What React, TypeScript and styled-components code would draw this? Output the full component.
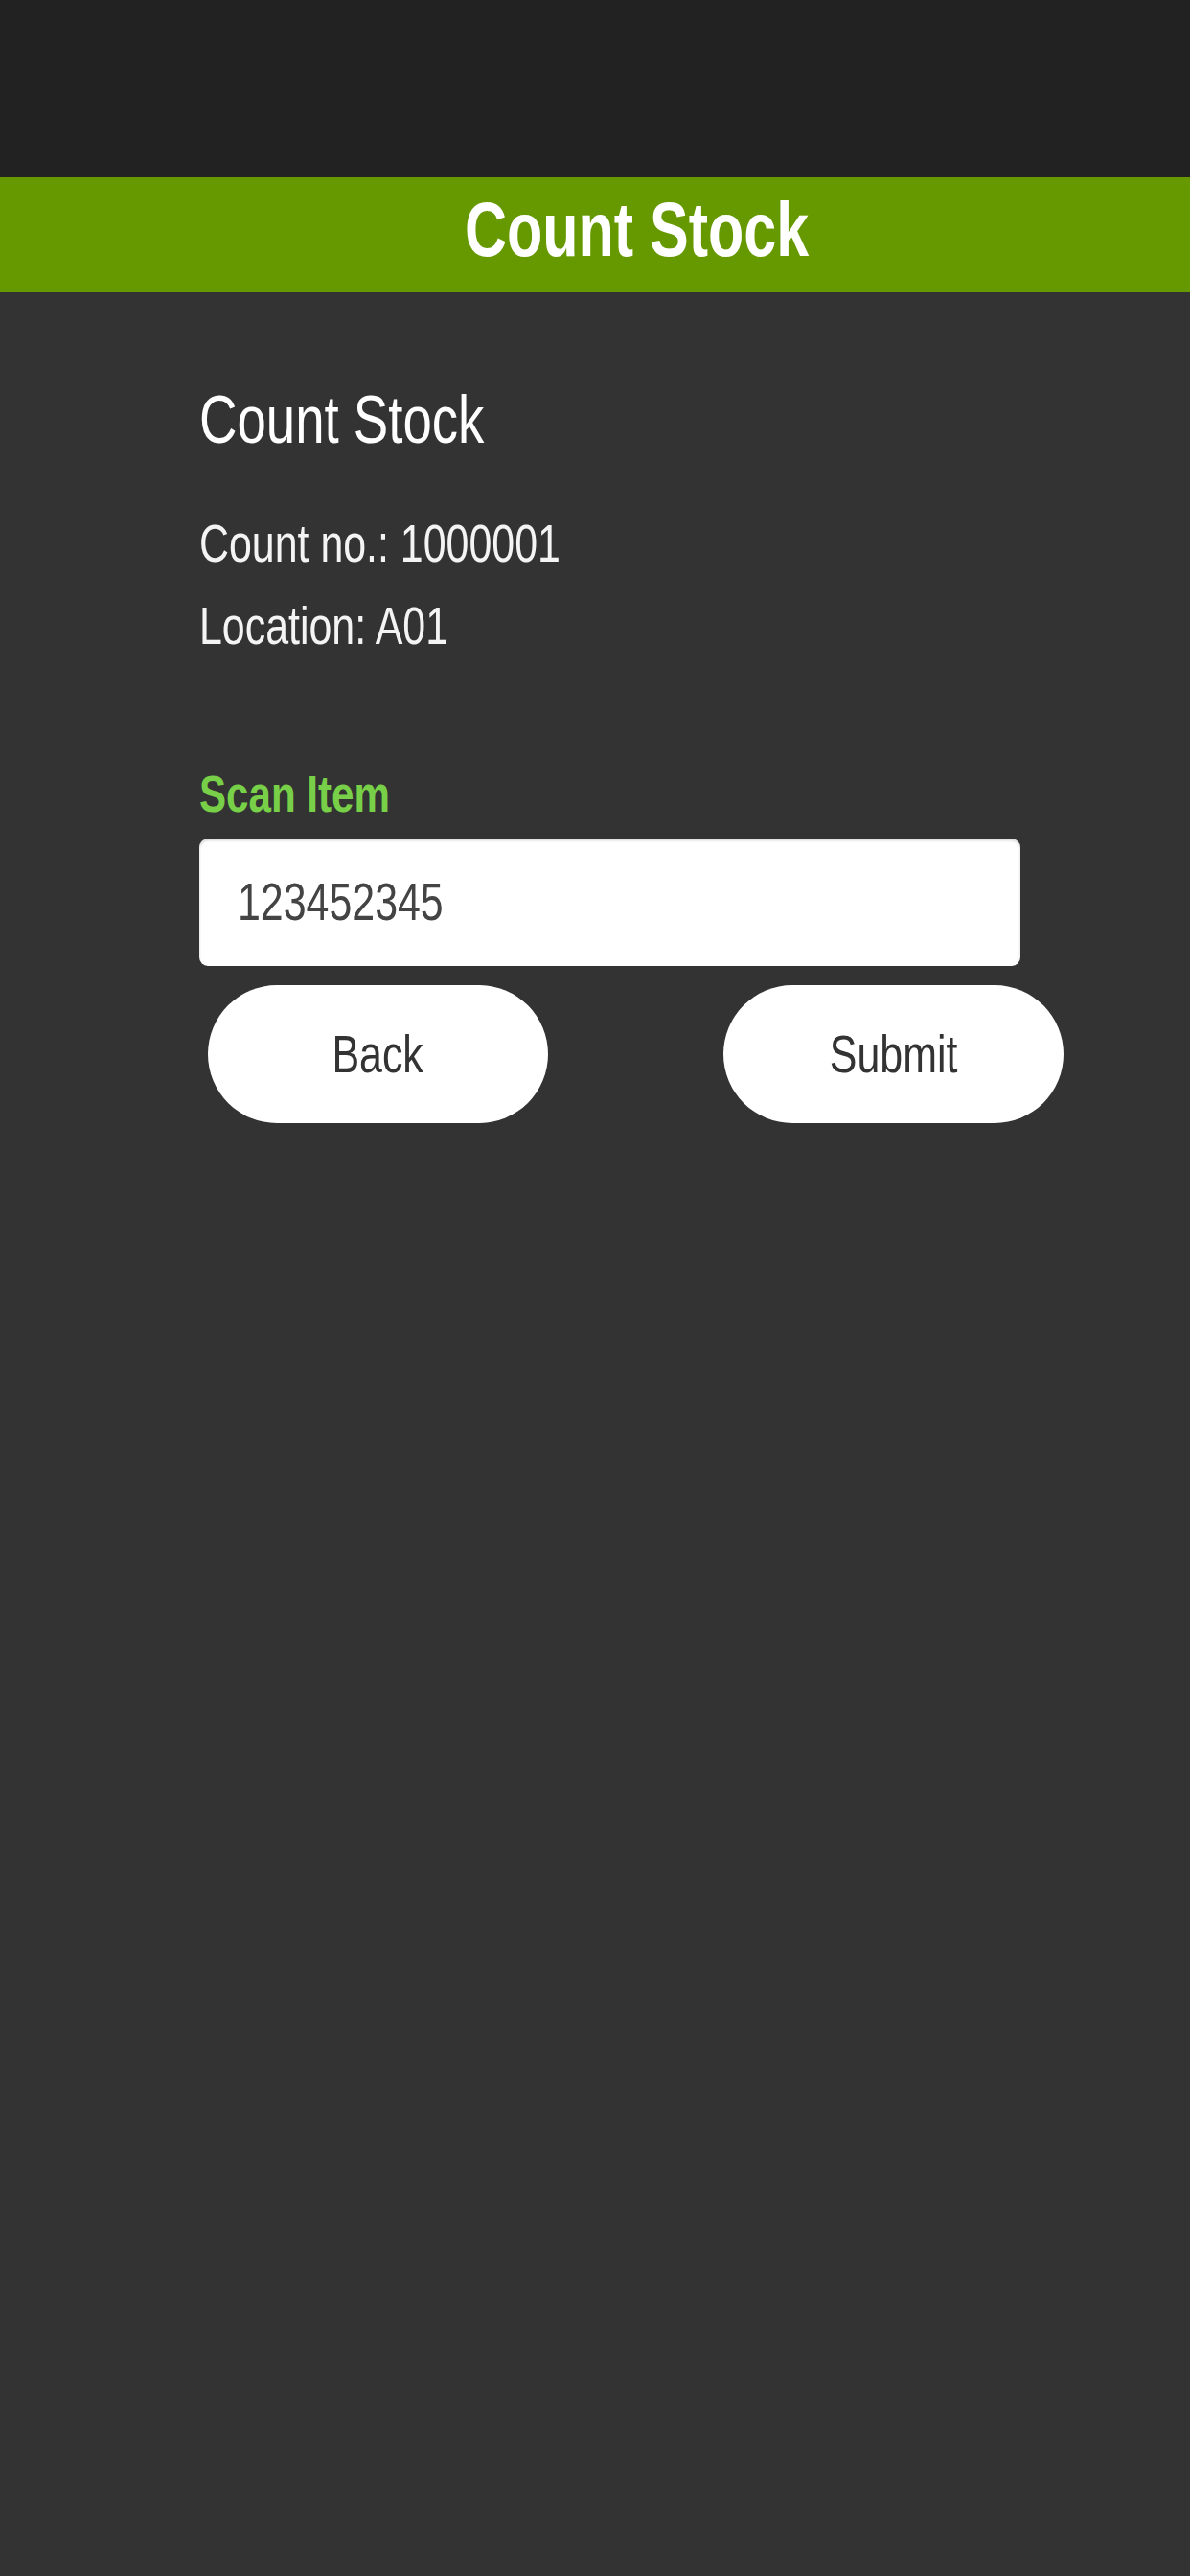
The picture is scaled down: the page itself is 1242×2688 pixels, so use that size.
import React from 'react';
import styled, { createGlobalStyle } from 'styled-components';

const GlobalStyle = createGlobalStyle`
  html, body {
    margin: 0;
    padding: 0;
    background: #333333;
    font-family: "Liberation Sans", Arial, sans-serif;
  }
`;

// the source capture is narrower than the font's natural width
const Squeeze = styled.span<{ $origin?: 'left' | 'center'; $scale?: number }>`
  display: inline-block;
  white-space: nowrap;
  transform: scaleX(${props => props.$scale ?? 0.78});
  transform-origin: ${props => props.$origin || 'left'} center;
`;

const Page = styled.div`
  min-height: 2688px;
  background: #333333;
`;

const StatusBar = styled.div`
  height: 185px;
  background: #222222;
`;

const Header = styled.header`
  height: 110px;
  padding: 0 0 10px 88px;
  background: #669900;
  color: #ffffff;
  font-size: 79px;
  font-weight: 700;
  line-height: 110px;
  text-align: center;
`;

const Content = styled.main`
  display: flex;
  flex-direction: column;
  padding: 93px 0 0 208px;
`;

const Subtitle = styled.h2`
  margin: 0 0 46px;
  color: #ffffff;
  font-size: 70px;
  font-weight: 400;
  line-height: 80px;
`;

const InfoLine = styled.div`
  color: #f4f4f4;
  font-size: 55px;
  line-height: 86px;
`;

const FieldLabel = styled.label`
  margin: 102px 0 17px;
  color: #78d048;
  font-size: 54px;
  font-weight: 700;
  line-height: 60px;
`;

const InputBox = styled.div`
  box-sizing: border-box;
  width: 857px;
  height: 133px;
  padding-left: 40px;
  border-radius: 9px;
  background: #ffffff;
  box-shadow: inset 0 2px 3px rgba(0, 0, 0, 0.18);
  color: #444444;
  font-size: 55px;
  line-height: 133px;
`;

const ButtonRow = styled.div`
  display: flex;
  gap: 183px;
  margin: 20px 0 0 9px;
`;

const PillButton = styled.button`
  width: 355px;
  height: 144px;
  padding: 0;
  border: none;
  border-radius: 72px;
  background: #ffffff;
  color: #333333;
  font-family: "Liberation Sans", Arial, sans-serif;
  font-size: 55px;
  line-height: 144px;
  text-align: center;
  cursor: pointer;
`;

const App: React.FC = () => {
  return (
    <Page>
      <GlobalStyle />
      <StatusBar />
      <Header>
        <Squeeze $origin="center" $scale={0.772}>Count Stock</Squeeze>
      </Header>
      <Content>
        <Subtitle>
          <Squeeze>Count Stock</Squeeze>
        </Subtitle>
        <InfoLine>
          <Squeeze>Count no.: 1000001</Squeeze>
        </InfoLine>
        <InfoLine>
          <Squeeze>Location: A01</Squeeze>
        </InfoLine>
        <FieldLabel>
          <Squeeze>Scan Item</Squeeze>
        </FieldLabel>
        <InputBox role="textbox">
          <Squeeze>123452345</Squeeze>
        </InputBox>
        <ButtonRow>
          <PillButton>
            <Squeeze $origin="center">Back</Squeeze>
          </PillButton>
          <PillButton>
            <Squeeze $origin="center">Submit</Squeeze>
          </PillButton>
        </ButtonRow>
      </Content>
    </Page>
  );
};

export default App;
